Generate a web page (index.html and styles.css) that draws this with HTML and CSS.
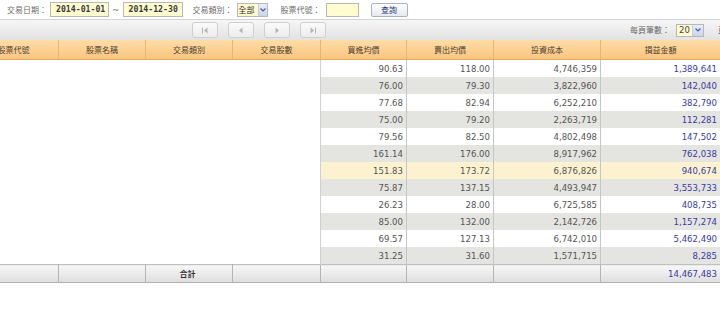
FILE: index.html
```html
<!DOCTYPE html>
<html lang="zh-Hant">
<head>
<meta charset="utf-8">
<title>交易查詢</title>
<link rel="stylesheet" href="styles.css">
</head>
<body>
<div class="page">
  <form class="filters">
    <span class="lbl l1">交易日期：</span>
    <span class="date d1">2014-01-01</span>
    <span class="tilde">~</span>
    <span class="date d2">2014-12-30</span>
    <span class="lbl l2">交易類別：</span>
    <span class="sel s1"><span class="sel-val">全部</span><span class="sel-btn"><svg width="6" height="4" viewBox="0 0 6 4"><path d="M0.5 0.5 L3 3 L5.5 0.5" fill="none" stroke="#4a5f9a" stroke-width="1.2"/></svg></span></span>
    <span class="lbl l3">股票代號：</span>
    <span class="txt"></span>
    <span class="btn">查詢</span>
  </form>

  <div class="toolbar">
    <div class="pager">
      <span class="pbtn"><svg width="8" height="7" viewBox="0 0 8 7"><rect x="1" y="0.5" width="1" height="6" fill="#b4b4b4"/><path d="M6.5 0.5 L3 3.5 L6.5 6.5Z" fill="#b4b4b4"/></svg></span>
      <span class="pbtn"><svg width="8" height="7" viewBox="0 0 8 7"><path d="M5.5 0.5 L2 3.5 L5.5 6.5Z" fill="#b4b4b4"/></svg></span>
      <span class="pbtn"><svg width="8" height="7" viewBox="0 0 8 7"><path d="M2.5 0.5 L6 3.5 L2.5 6.5Z" fill="#b4b4b4"/></svg></span>
      <span class="pbtn"><svg width="8" height="7" viewBox="0 0 8 7"><path d="M1.5 0.5 L5 3.5 L1.5 6.5Z" fill="#b4b4b4"/><rect x="6" y="0.5" width="1" height="6" fill="#b4b4b4"/></svg></span>
    </div>
    <div class="perpage">
      <span class="lbl">每頁筆數：</span>
      <span class="sel s2"><span class="sel-val">20</span><span class="sel-btn"><svg width="6" height="4" viewBox="0 0 6 4"><path d="M0.5 0.5 L3 3 L5.5 0.5" fill="none" stroke="#4a5f9a" stroke-width="1.2"/></svg></span></span>
      <span class="lbl pg">頁</span>
    </div>
  </div>

  <div class="grid">
    <table>
      <colgroup>
        <col class="c1"><col class="c2"><col class="c3"><col class="c4">
        <col class="c5"><col class="c6"><col class="c7"><col class="c8">
      </colgroup>
      <thead>
        <tr>
          <th>股票代號</th><th>股票名稱</th><th>交易類別</th><th>交易股數</th>
          <th>買進均價</th><th>賣出均價</th><th>投資成本</th><th>損益金額</th>
        </tr>
      </thead>
      <tbody>
        <tr><td class="f"></td><td class="f"></td><td class="f"></td><td class="f"></td><td class="n first">90.63</td><td class="n">118.00</td><td class="n">4,746,359</td><td class="n pl">1,389,641</td></tr>
        <tr class="alt"><td class="f"></td><td class="f"></td><td class="f"></td><td class="f"></td><td class="n first">76.00</td><td class="n">79.30</td><td class="n">3,822,960</td><td class="n pl">142,040</td></tr>
        <tr><td class="f"></td><td class="f"></td><td class="f"></td><td class="f"></td><td class="n first">77.68</td><td class="n">82.94</td><td class="n">6,252,210</td><td class="n pl">382,790</td></tr>
        <tr class="alt"><td class="f"></td><td class="f"></td><td class="f"></td><td class="f"></td><td class="n first">75.00</td><td class="n">79.20</td><td class="n">2,263,719</td><td class="n pl">112,281</td></tr>
        <tr><td class="f"></td><td class="f"></td><td class="f"></td><td class="f"></td><td class="n first">79.56</td><td class="n">82.50</td><td class="n">4,802,498</td><td class="n pl">147,502</td></tr>
        <tr class="alt"><td class="f"></td><td class="f"></td><td class="f"></td><td class="f"></td><td class="n first">161.14</td><td class="n">176.00</td><td class="n">8,917,962</td><td class="n pl">762,038</td></tr>
        <tr class="hl"><td class="f"></td><td class="f"></td><td class="f"></td><td class="f"></td><td class="n first">151.83</td><td class="n">173.72</td><td class="n">6,876,826</td><td class="n pl">940,674</td></tr>
        <tr class="alt"><td class="f"></td><td class="f"></td><td class="f"></td><td class="f"></td><td class="n first">75.87</td><td class="n">137.15</td><td class="n">4,493,947</td><td class="n pl">3,553,733</td></tr>
        <tr><td class="f"></td><td class="f"></td><td class="f"></td><td class="f"></td><td class="n first">26.23</td><td class="n">28.00</td><td class="n">6,725,585</td><td class="n pl">408,735</td></tr>
        <tr class="alt"><td class="f"></td><td class="f"></td><td class="f"></td><td class="f"></td><td class="n first">85.00</td><td class="n">132.00</td><td class="n">2,142,726</td><td class="n pl">1,157,274</td></tr>
        <tr><td class="f"></td><td class="f"></td><td class="f"></td><td class="f"></td><td class="n first">69.57</td><td class="n">127.13</td><td class="n">6,742,010</td><td class="n pl">5,462,490</td></tr>
        <tr class="alt"><td class="f"></td><td class="f"></td><td class="f"></td><td class="f"></td><td class="n first">31.25</td><td class="n">31.60</td><td class="n">1,571,715</td><td class="n pl">8,285</td></tr>
      </tbody>
      <tfoot>
        <tr>
          <td></td><td></td><td class="sum">合計</td><td></td>
          <td></td><td></td><td></td><td class="n pl">14,467,483</td>
        </tr>
      </tfoot>
    </table>
  </div>
</div>
</body>
</html>
```

FILE: styles.css
```css
html, body {
  margin: 0;
  padding: 0;
  background: #ffffff;
  overflow: hidden;
}

.page {
  width: 720px;
  height: 324px;
  overflow: hidden;
  font-family: "Noto Sans CJK TC", "DejaVu Sans", sans-serif;
  color: #555;
}

/* ---- filter row ---- */
.filters {
  display: flex;
  align-items: center;
  height: 19px;
  margin: 0;
  padding: 0;
}

.lbl {
  font-size: 8px;
  line-height: 10px;
  color: #6a6a6a;
  white-space: nowrap;
}

.l1 { margin-left: 7px; }
.l2 { margin-left: 10px; }
.l3 { margin-left: 13px; }

.date {
  box-sizing: border-box;
  height: 15px;
  width: 59px;
  margin-left: 3px;
  border: 1px solid #b8b8b8;
  background: #fffcd0;
  font-family: "DejaVu Sans Mono", "Liberation Mono", monospace;
  font-weight: bold;
  font-size: 8.2px;
  line-height: 13px;
  color: #3a3a3a;
  padding-left: 5px;
}

.date.d2 { margin-left: 0; width: 60px; }

.tilde {
  font-family: "DejaVu Sans", sans-serif;
  font-size: 9px;
  color: #777;
  margin: 0 3px 0 3px;
}

.sel {
  box-sizing: border-box;
  display: flex;
  align-items: stretch;
  height: 14px;
  border: 1px solid #b8b8b8;
  background: #fffcd0;
}

.s1 { width: 31px; margin-left: 4px; }

.sel-val {
  flex: 1;
  font-size: 8px;
  line-height: 12px;
  color: #333;
  padding-left: 1px;
}

.sel-btn {
  width: 8px;
  display: flex;
  align-items: center;
  justify-content: center;
  background: linear-gradient(#e9eef8, #c9d4ea);
  border-left: 1px solid #c4cbe0;
}

.txt {
  box-sizing: border-box;
  width: 33px;
  height: 14px;
  margin-left: 5px;
  border: 1px solid #b8b8b8;
  background: #fffcd0;
}

.btn {
  box-sizing: border-box;
  width: 37px;
  height: 14px;
  margin-left: 12px;
  border: 1px solid #a9b2c2;
  border-radius: 2px;
  background: linear-gradient(#ffffff, #e6e9ef);
  font-size: 8px;
  line-height: 12px;
  text-align: center;
  color: #2d3f7a;
}

/* ---- toolbar ---- */
.toolbar {
  box-sizing: border-box;
  display: flex;
  align-items: center;
  width: 726px;
  height: 21px;
  border-top: 1px solid #d4d4d4;
  background: linear-gradient(#f6f6f6, #e2e2e2);
}

.pager {
  display: flex;
  gap: 10px;
  margin-left: 192px;
}

.pbtn {
  box-sizing: border-box;
  width: 26px;
  height: 16px;
  display: flex;
  align-items: center;
  justify-content: center;
  border: 1px solid #cfcfcf;
  border-radius: 3px;
  background: linear-gradient(#fbfbfb, #ececec);
}

.perpage {
  display: flex;
  align-items: center;
  margin-left: auto;
}

.s2 {
  width: 28px;
  height: 13px;
  margin-left: 6px;
}

.s2 .sel-val {
  font-family: "DejaVu Sans", sans-serif;
  font-size: 8.5px;
  line-height: 11px;
  padding-left: 2px;
  color: #444;
}

.s2 .sel-btn { width: 10px; }

.pg { margin-left: 14px; }

/* ---- grid ---- */
.grid {
  width: 720px;
  overflow: hidden;
}

table {
  table-layout: fixed;
  border-collapse: collapse;
  width: 752px;
  margin-left: -32px;
}

col.c1 { width: 90px; }
col.c2 { width: 87px; }
col.c3 { width: 87px; }
col.c4 { width: 88px; }
col.c5 { width: 86px; }
col.c6 { width: 87px; }
col.c7 { width: 107px; }
col.c8 { width: 120px; }

th {
  height: 19px;
  padding: 0;
  font-weight: normal;
  font-size: 8px;
  color: #4a4030;
  text-align: center;
  background: linear-gradient(#fedca6, #f9c57f);
  border-left: 1px solid #e8b574;
  border-right: 1px solid #e8b574;
  border-bottom: 1px solid #e2a85e;
}

tbody td {
  height: 17px;
  padding: 0 3px 0 0;
  font-family: "DejaVu Sans Condensed", "DejaVu Sans", sans-serif;
  font-size: 9.5px;
  color: #555;
  background: #ffffff;
}

tbody td.f {
  background: #ffffff;
}

tbody td.n {
  text-align: right;
  border-right: 1px solid #c6c6c6;
}

tbody td.first {
  border-left: 1px solid #d0d0d0;
}

tbody tr.alt td.n { background: #e4e4e0; }
tbody tr.hl td.n { background: #fcf2cf; }

td.pl { color: #3a3aa2; }

tfoot td {
  height: 17px;
  padding: 0 3px 0 0;
  font-size: 8px;
  background: linear-gradient(#f7f7f7, #dedede);
  border-top: 1px solid #c0c0c0;
  border-bottom: 1px solid #b0b0b0;
  border-left: 1px solid #b4b4b4;
  border-right: 1px solid #b4b4b4;
}

tfoot td.sum {
  text-align: center;
  font-weight: bold;
  color: #333;
}

tfoot td.n {
  text-align: right;
  font-family: "DejaVu Sans Condensed", "DejaVu Sans", sans-serif;
  font-size: 9.5px;
}
```
